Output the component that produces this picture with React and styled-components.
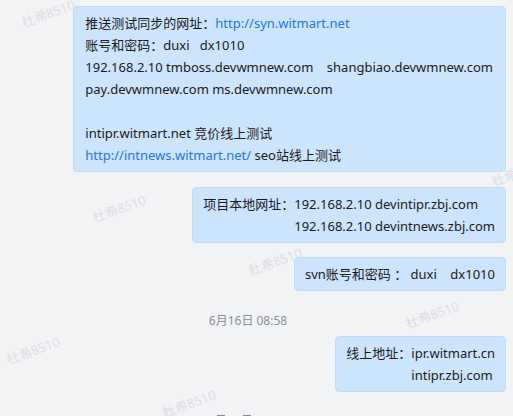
import React from "react";
import styled, { createGlobalStyle } from "styled-components";

const GlobalStyle = createGlobalStyle`
  html, body {
    margin: 0;
    padding: 0;
    background: #f2f3f5;
    overflow: hidden;
  }
  body {
    font-family: "Noto Sans", "Noto Sans CJK SC", sans-serif;
    font-size: 13px;
    color: #1b1b1b;
  }
`;

const Page = styled.div`
  position: relative;
  width: 513px;
  height: 416px;
  overflow: hidden;
  background: #f2f3f5;
`;

const Watermarks = styled.div`
  position: absolute;
  inset: 0;
  z-index: 0;
  pointer-events: none;
`;

const Mark = styled.span`
  position: absolute;
  transform: translate(-50%, -50%) rotate(-20deg);
  color: #dfe0e3;
  font-size: 13px;
  white-space: nowrap;
`;

const Chat = styled.div`
  position: relative;
  z-index: 1;
  display: flex;
  flex-direction: column;
  align-items: flex-end;
  padding: 6px 7px 0 0;
`;

const Bubble = styled.div`
  background: #cce4fc;
  border: 1px solid #c3dcf6;
  border-radius: 4px;
  padding: ${(p) => (p.$wide ? "5px 12px 5px 11px" : "5px 10px")};
  line-height: 22px;
  white-space: pre;
  margin-bottom: ${(p) => (p.$gap ? p.$gap : 14)}px;
`;

const Line = styled.div`
  min-height: 22px;
`;

const Link = styled.span`
  color: #2477e4;
`;

const Labeled = styled.div`
  display: grid;
  grid-template-columns: auto auto;
`;

const Values = styled.div`
  display: flex;
  flex-direction: column;
`;

const Time = styled.div`
  align-self: stretch;
  text-align: center;
  padding-right: 10px;
  margin: 6px 0 5px;
  line-height: 20px;
  font-size: 12px;
  color: #8b9099;
`;

const Peek = styled.div`
  align-self: stretch;
  display: flex;
  gap: 18px;
  padding: 9px 0 0 217px;
`;

const PeekBar = styled.span`
  width: 8px;
  height: 8px;
  background: #85868d;
`;

const marks = [];
for (let i = -2; i <= 4; i++) {
  for (let j = -1; j <= 3; j++) {
    const x = 48 + i * 156.5 - j * 86;
    const y = 13 + i * 53 + j * 142;
    if (x > 20 && x < 540 && y > 5 && y < 420) marks.push({ x, y });
  }
}

const App = () => {
  return (
    <Page>
      <GlobalStyle />
      <Watermarks>
        {marks.map((m, k) => (
          <Mark key={k} style={{ left: m.x, top: m.y }}>
            杜希8510
          </Mark>
        ))}
      </Watermarks>
      <Chat>
        <Bubble $gap={15} $wide>
          <Line>
            推送测试同步的网址：<Link>http://syn.witmart.net</Link>
          </Line>
          <Line>账号和密码：duxi   dx1010</Line>
          <Line>192.168.2.10 tmboss.devwmnew.com    shangbiao.devwmnew.com</Line>
          <Line>pay.devwmnew.com ms.devwmnew.com</Line>
          <Line />
          <Line>intipr.witmart.net 竞价线上测试</Line>
          <Line>
            <Link>http://intnews.witmart.net/</Link> seo站线上测试
          </Line>
        </Bubble>

        <Bubble>
          <Labeled>
            <Line>项目本地网址：</Line>
            <Values>
              <Line>192.168.2.10 devintipr.zbj.com</Line>
              <Line>192.168.2.10 devintnews.zbj.com</Line>
            </Values>
          </Labeled>
        </Bubble>

        <Bubble>
          <Line>svn账号和密码 ： duxi    dx1010</Line>
        </Bubble>

        <Time>6月16日 08:58</Time>

        <Bubble>
          <Labeled>
            <Line>线上地址：</Line>
            <Values>
              <Line>ipr.witmart.cn</Line>
              <Line>intipr.zbj.com</Line>
            </Values>
          </Labeled>
        </Bubble>

        <Peek>
          <PeekBar />
          <PeekBar />
        </Peek>
      </Chat>
    </Page>
  );
};

export default App;
